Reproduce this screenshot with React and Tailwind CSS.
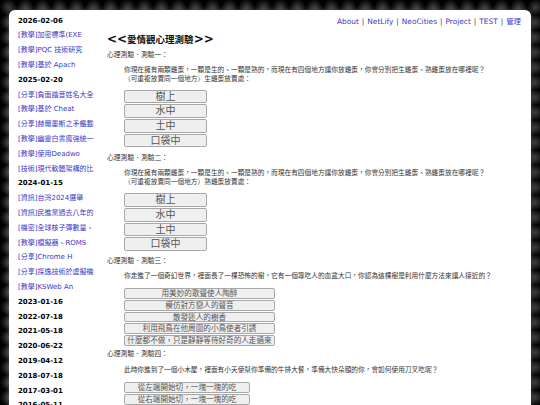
const sidebar = [
  { date: "2026-02-06" },
  { link: "[教學]加密標準(EXE" },
  { link: "[教學]PQC 技術研究" },
  { link: "[教學]基於 Apach" },
  { date: "2025-02-20" },
  { link: "[分享]負面諧音姓名大全" },
  { link: "[教學]基於 Cheat" },
  { link: "[分享]赫爾墨斯之矛艦載" },
  { link: "[教學]幽靈白書魔強統一" },
  { link: "[教學]使用Deadwo" },
  { link: "[技術]現代軟體架構的比" },
  { date: "2024-01-15" },
  { link: "[資訊]台灣2024選舉" },
  { link: "[資訊]民進黨過去八年的" },
  { link: "[機密]全球核子彈數量、" },
  { link: "[教學]模擬器、ROMS" },
  { link: "[分享]Chrome H" },
  { link: "[分享]探逸技術於虛擬機" },
  { link: "[教學]KSWeb An" },
  { date: "2023-01-16" },
  { date: "2022-07-18" },
  { date: "2021-05-18" },
  { date: "2020-06-22" },
  { date: "2019-04-12" },
  { date: "2018-07-18" },
  { date: "2017-03-01" },
  { date: "2016-05-11" },
];

const navLinks = ["About", "NetLify", "NeoCities", "Project", "TEST", "管理"];

const eggQ =
  "你現在擁有兩顆雞蛋，一顆是生的、一顆是熟的，而現在有四個地方讓你放雞蛋，你會分別把生雞蛋、熟雞蛋放在哪裡呢？";

function Choices({ items, big }) {
  return (
    <div className={`flex flex-col gap-[1px] ml-[17px] ${big ? "w-[83px]" : ""}`}>
      {items.map((t) => (
        <button
          key={t}
          className={`rounded-[2px] border border-[#a8a8a8] bg-[#efefef] text-[#555] text-center whitespace-nowrap ${
            big ? "h-[13.7px] text-[10px] leading-[12px]" : "h-[10.8px] text-[7.6px] leading-[9px]"
          }`}
        >
          {t}
        </button>
      ))}
    </div>
  );
}

function Label({ children, className = "" }) {
  return <div className={`text-[6.8px] leading-[9px] text-[#333] ${className}`}>{children}</div>;
}

function Para({ children, className = "" }) {
  return <p className={`ml-[17px] text-[6.7px] leading-[8.5px] text-[#333] whitespace-nowrap ${className}`}>{children}</p>;
}

export default function App() {
  return (
    <div className="min-h-screen h-[405px] overflow-hidden bg-[#050505] bg-[radial-gradient(circle,#3e3e3e_0,#1a1a1a_45%,#000_75%)] bg-[length:17px_15px] pt-[10px] px-[9px] font-['DejaVu_Sans','Noto_Sans_CJK_TC',sans-serif]">
      <div className="flex h-[420px] rounded-t-[6px] bg-white shadow-[0_0_5px_rgba(200,200,200,0.35)]">
        {/* sidebar */}
        <aside className="w-[98px] shrink-0 overflow-hidden pl-[9px] pt-[3.6px]">
          {sidebar.map((s, i) => (
            <div key={i} className="h-[14.8px] leading-[14.8px] text-[7px] whitespace-nowrap overflow-hidden w-[78px]">
              {s.date ? (
                <span className="font-bold text-black">{s.date}</span>
              ) : (
                <a className="text-[#3838c8]">{s.link}</a>
              )}
            </div>
          ))}
        </aside>

        {/* main */}
        <main className="flex-1 pr-[10px] pt-[6px]">
          <nav className="flex justify-end h-[12px] leading-[12px] text-[7.4px]">
            {navLinks.map((n, i) => (
              <span key={n} className="flex">
                {i > 0 && <span className="text-[#444] px-[3px]">|</span>}
                <a className="text-[#3838c8]">{n}</a>
              </span>
            ))}
          </nav>

          <h1 className="mt-[3px] h-[14px] leading-[14px] font-bold text-[#111]">
            <span className="text-[12px]">&lt;&lt;</span>
            <span className="text-[9.5px]">愛情觀心理測驗</span>
            <span className="text-[12px]">&gt;&gt;</span>
          </h1>

          <Label className="mt-[6px]">心理測驗．測驗一：</Label>
          <Para className="mt-[6.25px]">
            {eggQ}
            <br />（可重複放置同一個地方）生雞蛋放置處：
          </Para>
          <div className="mt-[6.25px]">
            <Choices big items={["樹上", "水中", "土中", "口袋中"]} />
          </div>

          <Label className="mt-[6.5px]">心理測驗．測驗二：</Label>
          <Para className="mt-[6.25px]">
            {eggQ}
            <br />（可重複放置同一個地方）熟雞蛋放置處：
          </Para>
          <div className="mt-[7.25px]">
            <Choices big items={["樹上", "水中", "土中", "口袋中"]} />
          </div>

          <Label className="mt-[5.5px]">心理測驗．測驗三：</Label>
          <Para className="mt-[6.25px]">
            你走進了一個奇幻世界，裡面長了一棵恐怖的樹，它有一個專吃人的血盆大口，你認為這棵樹是利用什麼方法來讓人接近的？
          </Para>
          <div className="mt-[7.75px] w-[168px]">
            <Choices
              items={[
                "用美妙的歌聲使人陶醉",
                "模仿對方戀人的聲音",
                "散發迷人的樹香",
                "利用飛鳥在他周圍的小鳥使者引誘",
                "什麼都不做，只是靜靜等待好奇的人走過來",
              ]}
            />
          </div>

          <Label className="mt-[4.5px]">心理測驗．測驗四：</Label>
          <Para className="mt-[6.25px]">
            此時你進到了一個小木屋，裡面有小天使幫你準備的牛排大餐，準備大快朵頤的你，會如何使用刀叉吃呢？
          </Para>
          <div className="mt-[7.75px] w-[143px]">
            <Choices items={["從左端開始切，一塊一塊的吃", "從右端開始切，一塊一塊的吃"]} />
          </div>
        </main>
      </div>
    </div>
  );
}
